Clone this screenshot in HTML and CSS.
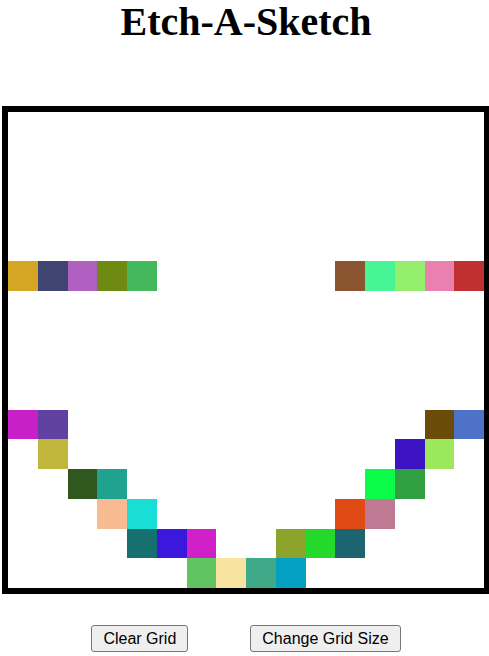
FILE: index.html
```html
<!DOCTYPE html>
<html lang="en">
<head>
<meta charset="utf-8">
<title>Etch-A-Sketch</title>
<link rel="stylesheet" href="styles.css">
</head>
<body>
<h1 class="title">Etch-A-Sketch</h1>
<div class="board" id="board"></div>
<div class="controls">
  <button class="btn" type="button">Clear Grid</button>
  <button class="btn" type="button">Change Grid Size</button>
</div>
<script src="script.js"></script>
</body>
</html>
```
FILE: styles.css
```css
html, body {
  margin: 0;
  background: #ffffff;
}
body {
  padding-left: 3px;
  display: flex;
  flex-direction: column;
  align-items: center;
  font-family: "Liberation Serif", "Times New Roman", serif;
}
.title {
  margin: 0;
  font-size: 40px;
  line-height: 44px;
  font-weight: bold;
  color: #000;
  text-align: center;
}
.board {
  margin-top: 62px;
  width: 476px;
  height: 476px;
  flex: none;
  border: 6px solid #000;
  display: grid;
  grid-template-columns: repeat(16, 1fr);
  grid-template-rows: repeat(16, 1fr);
  background: #fff;
}
.cell {
  background: #fff;
}
.controls {
  margin-top: 31px;
  display: flex;
  gap: 62px;
  justify-content: center;
}
.btn {
  font-family: "Liberation Sans", Arial, sans-serif;
  font-size: 16px;
  line-height: 18px;
  height: 27px;
  padding: 0 11px;
  color: #000;
  background: #efefef;
  border: 1px solid #767676;
  border-radius: 3px;
}
```
FILE: script.js
```js
const board = document.getElementById('board');
const painted = {
  '5,0': '#d5a524', '5,1': '#3f4570', '5,2': '#b060c0', '5,3': '#6e8a10', '5,4': '#44b85c',
  '5,11': '#8a5530', '5,12': '#48f594', '5,13': '#94f06c', '5,14': '#ea80b0', '5,15': '#c03030',
  '10,0': '#c820c8', '10,1': '#6040a0', '10,14': '#6a4b08', '10,15': '#4e72c8',
  '11,1': '#c0b63c', '11,13': '#3c14c4', '11,14': '#9ce85c',
  '12,2': '#30581e', '12,3': '#20a290', '12,12': '#0afc48', '12,13': '#30a040',
  '13,3': '#f8ba90', '13,4': '#18ded6', '13,11': '#e04a14', '13,12': '#c07a94',
  '14,4': '#177070', '14,5': '#3a18dc', '14,6': '#d020c8', '14,9': '#8ca42c', '14,10': '#24d82c', '14,11': '#1b6470',
  '15,6': '#60c460', '15,7': '#f8e4a0', '15,8': '#40aa88', '15,9': '#04a0c4'
};
for (let r = 0; r < 16; r++) {
  for (let c = 0; c < 16; c++) {
    const cell = document.createElement('div');
    cell.className = 'cell';
    const color = painted[r + ',' + c];
    if (color) cell.style.backgroundColor = color;
    board.appendChild(cell);
  }
}
```
